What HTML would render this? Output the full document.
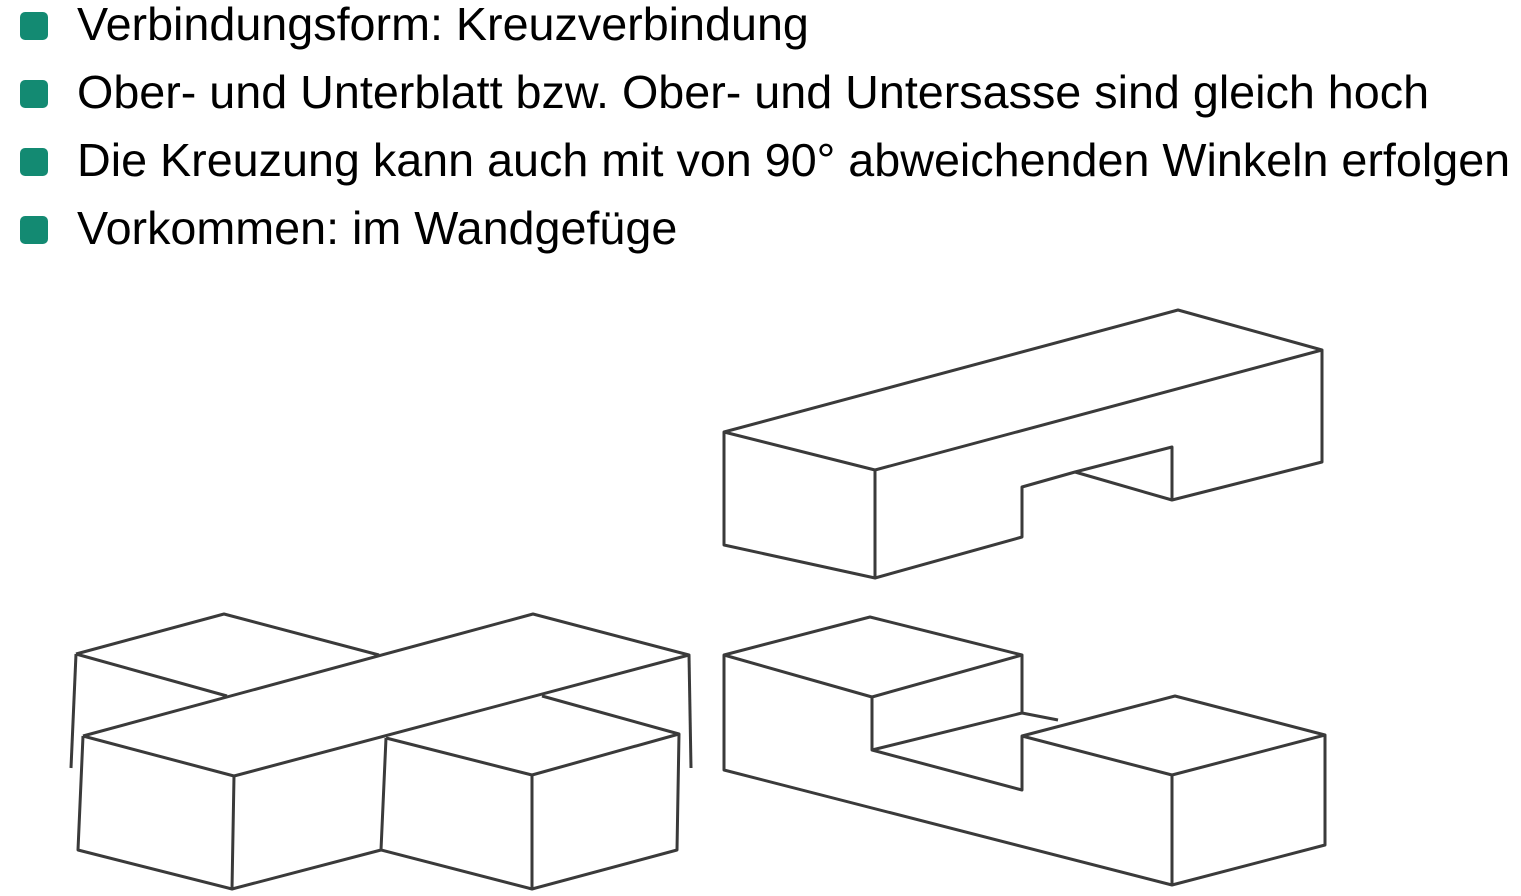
<!DOCTYPE html>
<html><head><meta charset="utf-8"><style>
html,body{margin:0;padding:0;background:#fff;width:1521px;height:896px;overflow:hidden}
.l{position:absolute;left:77px;font-family:"Liberation Sans",sans-serif;font-size:46.7px;color:#000;line-height:1;white-space:nowrap}
.b{position:absolute;left:20px;width:28px;height:28px;background:#138a72;border-radius:5px}
svg{position:absolute;left:0;top:0}
</style></head><body>
<div class="b" style="top:12px"></div><div class="l" style="top:1px">Verbindungsform: Kreuzverbindung</div>
<div class="b" style="top:80px"></div><div class="l" style="top:69px">Ober- und Unterblatt bzw. Ober- und Untersasse sind gleich hoch</div>
<div class="b" style="top:148px"></div><div class="l" style="top:137px">Die Kreuzung kann auch mit von 90° abweichenden Winkeln erfolgen</div>
<div class="b" style="top:216px"></div><div class="l" style="top:205px">Vorkommen: im Wandgefüge</div>
<svg width="1521" height="896" fill="none" stroke="#3a3a3a" stroke-width="3" stroke-linejoin="round">
<path d="M76 654 L224 614 L379 655"/>
<path d="M76 654 L227 696"/>
<path d="M76 654 L71 768"/>
<path d="M83 736 L533 614 L689 655 L234 776 L83 736"/>
<path d="M689 655 L691 768"/>
<path d="M83 736 L78 850 L232 889 L234 776"/>
<path d="M386 738 L381 850 L232 889"/>
<path d="M386 738 L532 775 L679 734 L542 696"/>
<path d="M532 775 L532 889 L381 850"/>
<path d="M679 734 L677 850 L532 889"/>
<path d="M724 432 L1178 310 L1322 350 L875 470 Z"/>
<path d="M724 432 L724 545 L875 578 L875 470"/>
<path d="M875 578 L1022 537 L1022 487 L1075 472 L1172 447 L1172 500 L1322 462 L1322 350"/>
<path d="M1075 472 L1172 500"/>
<path d="M724 655 L870 617 L1022 655 L872 697 Z"/>
<path d="M724 655 L724 770 L1172 885 L1325 845 L1325 735"/>
<path d="M872 697 L872 750 L1022 790 L1022 736"/>
<path d="M872 750 L1022 713 L1058 720"/>
<path d="M1022 655 L1022 713"/>
<path d="M1022 736 L1175 696 L1325 735 L1172 775 Z"/>
<path d="M1172 775 L1172 885"/>
</svg>
</body></html>
